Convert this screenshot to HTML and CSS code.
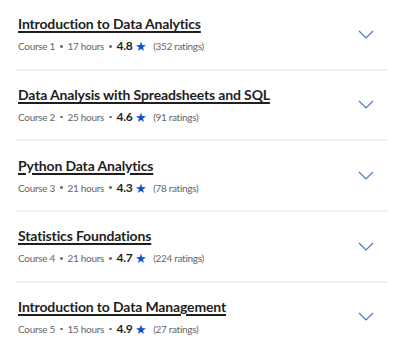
FILE: index.html
```html
<!DOCTYPE html>
<html lang="en">
<head>
<meta charset="utf-8" />
<title>Course series</title>
<link rel="stylesheet" href="styles.css">
</head>
<body>

<ul class="courses">
  <li class="course">
    <div class="info">
      <a class="title" href="#">Introduction to Data Analytics</a>
      <div class="meta">
        <span>Course 1</span><span class="dot"></span><span>17 hours</span><span class="dot"></span>
        <b class="rating">4.8</b><span class="star">★</span><span class="count">(352 ratings)</span>
      </div>
    </div>
    <svg class="chevron" width="16" height="9" viewBox="0 0 16 9"><path d="M1 1l7 7 7-7" /></svg>
  </li>
  <li class="course">
    <div class="info">
      <a class="title" href="#">Data Analysis with Spreadsheets and SQL</a>
      <div class="meta">
        <span>Course 2</span><span class="dot"></span><span>25 hours</span><span class="dot"></span>
        <b class="rating">4.6</b><span class="star">★</span><span class="count">(91 ratings)</span>
      </div>
    </div>
    <svg class="chevron" width="16" height="9" viewBox="0 0 16 9"><path d="M1 1l7 7 7-7" /></svg>
  </li>
  <li class="course">
    <div class="info">
      <a class="title" href="#">Python Data Analytics</a>
      <div class="meta">
        <span>Course 3</span><span class="dot"></span><span>21 hours</span><span class="dot"></span>
        <b class="rating">4.3</b><span class="star">★</span><span class="count">(78 ratings)</span>
      </div>
    </div>
    <svg class="chevron" width="16" height="9" viewBox="0 0 16 9"><path d="M1 1l7 7 7-7" /></svg>
  </li>
  <li class="course">
    <div class="info">
      <a class="title" href="#">Statistics Foundations</a>
      <div class="meta">
        <span>Course 4</span><span class="dot"></span><span>21 hours</span><span class="dot"></span>
        <b class="rating">4.7</b><span class="star">★</span><span class="count">(224 ratings)</span>
      </div>
    </div>
    <svg class="chevron" width="16" height="9" viewBox="0 0 16 9"><path d="M1 1l7 7 7-7" /></svg>
  </li>
  <li class="course">
    <div class="info">
      <a class="title" href="#">Introduction to Data Management</a>
      <div class="meta">
        <span>Course 5</span><span class="dot"></span><span>15 hours</span><span class="dot"></span>
        <b class="rating">4.9</b><span class="star">★</span><span class="count">(27 ratings)</span>
      </div>
    </div>
    <svg class="chevron" width="16" height="9" viewBox="0 0 16 9"><path d="M1 1l7 7 7-7" /></svg>
  </li>
</ul>

</body>
</html>
```

FILE: styles.css
```css
body {
  margin: 0;
  background: #fff;
  font-family: Lato, "Open Sans", sans-serif;
  color: #1f1f1f;
}

.courses {
  list-style: none;
  margin: 0;
  padding: 0 13px 0 16px;
}

.course {
  display: flex;
  align-items: center;
  justify-content: space-between;
  height: 68.67px;
  border-bottom: 2px solid #eef0f2;
  box-sizing: content-box;
}

.course:last-child { border-bottom: none; }

.info { padding-left: 2px; margin-top: -2px; }

.title {
  display: inline-block;
  font-size: 14px;
  font-weight: 700;
  line-height: 18px;
  letter-spacing: -0.15px;
  color: #1f1f1f;
  text-decoration: underline;
  text-decoration-thickness: 1.5px;
  text-underline-offset: 2px;
}

.meta {
  display: flex;
  align-items: center;
  margin-top: 6px;
  font-size: 10px;
  line-height: 14px;
  letter-spacing: -0.3px;
  color: #666;
}

.dot {
  width: 2.5px;
  height: 2.5px;
  border-radius: 50%;
  background: #777;
  margin: 0 5px;
}

.rating { font-size: 12px; font-weight: 700; color: #1f1f1f; letter-spacing: -0.3px; }
.star { color: #0056d2; font-size: 13px; margin: 0 6px 0 3px; }

.chevron {
  margin-right: 13px;
  fill: none;
  stroke: #4a78c4;
  stroke-width: 1.2;
}
```
